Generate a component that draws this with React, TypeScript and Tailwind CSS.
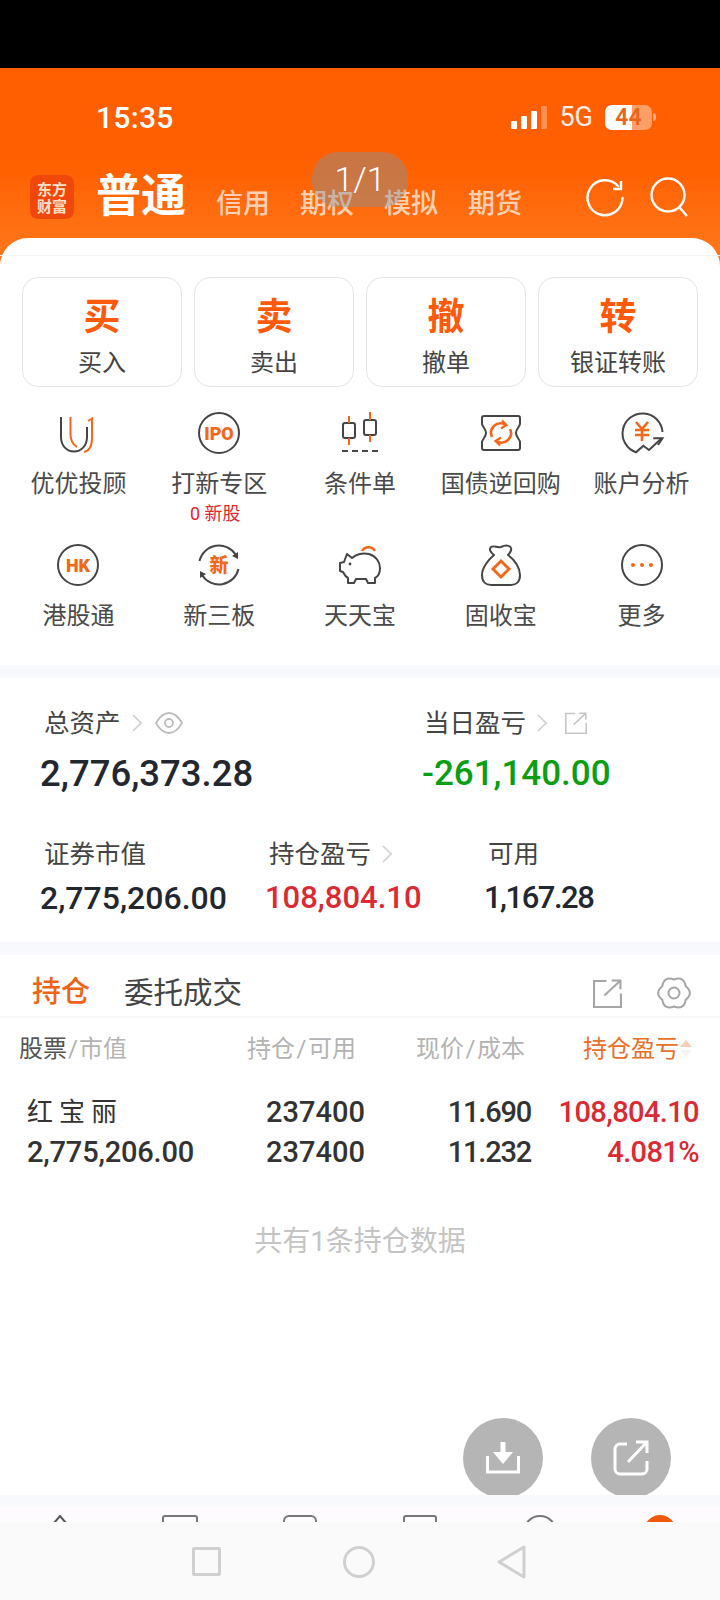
import React from 'react';

const CJK = "font-['Roboto','Noto_Sans_CJK_SC',sans-serif]";
const DARK = '#454545';
const ORANGE = '#f2681a';

const actions = [
  { big: '买', label: '买入' },
  { big: '卖', label: '卖出' },
  { big: '撤', label: '撤单' },
  { big: '转', label: '银证转账' },
];

function Ring() {
  return <circle cx="21" cy="21" r="20" fill="none" stroke={DARK} strokeWidth="2" />;
}

const icons: Record<string, React.ReactNode> = {
  u: (
    <>
      <path d="M4 5V25C4 34 10 39.5 17 39.5S30 34 30 25V15" fill="none" stroke={DARK} strokeWidth="2" />
      <path d="M13.5 5V22C13.5 28 15 32 20 35" fill="none" stroke={ORANGE} strokeWidth="2" />
      <path d="M31 9L35 6.5V26C35 34 32 39 27 40" fill="none" stroke={ORANGE} strokeWidth="2" />
    </>
  ),
  ipo: (
    <>
      <Ring />
      <text x="21" y="27.5" textAnchor="middle" fontSize="18" fontWeight="900" fill={ORANGE} fontFamily="Roboto, sans-serif">IPO</text>
    </>
  ),
  candle: (
    <>
      <rect x="4" y="11" width="12" height="15" rx="2" fill="none" stroke={DARK} strokeWidth="2" />
      <path d="M10 4V11M10 26V33" stroke={ORANGE} strokeWidth="2" />
      <rect x="25" y="8" width="12" height="15" rx="2" fill="none" stroke={DARK} strokeWidth="2" />
      <path d="M31 0V8M31 23V30" stroke={ORANGE} strokeWidth="2" />
      <path d="M3 39H39" stroke={DARK} strokeWidth="2" strokeDasharray="6 4" />
    </>
  ),
  ticket: (
    <>
      <path d="M4 4H38a2 2 0 0 1 2 2V12C40 14 36 17 36 21S40 28 40 30V36a2 2 0 0 1-2 2H4a2 2 0 0 1-2-2V30C2 28 6 25 6 21S2 14 2 12V6a2 2 0 0 1 2-2Z" fill="none" stroke={DARK} strokeWidth="2" strokeLinejoin="round" />
      <path d="M12 25A9.5 9.5 0 0 1 25 12.5M30 17A9.5 9.5 0 0 1 17 29.5" fill="none" stroke={ORANGE} strokeWidth="2.6" />
      <path d="M22 8.5L26.5 13 21 16.5M20 33.5L15.5 29 21 25.5" fill="none" stroke={ORANGE} strokeWidth="2.2" />
    </>
  ),
  yuan: (
    <>
      <path d="M41.5 20A20 20 0 1 0 15 40.3L22.3 33.7 28 38 40.7 26.3" fill="none" stroke={DARK} strokeWidth="2" />
      <path d="M32.3 26.3H41.5L37 33" fill="none" stroke={DARK} strokeWidth="2" />
      <path d="M15 10L21 17 27 10M14 18H28M14 23H28M21 17V29" fill="none" stroke={ORANGE} strokeWidth="2.6" />
    </>
  ),
  hk: (
    <>
      <Ring />
      <text x="21" y="27.5" textAnchor="middle" fontSize="18" fontWeight="900" fill={ORANGE} fontFamily="Roboto, sans-serif">HK</text>
    </>
  ),
  xin: (
    <>
      <path d="M1.5 17A20 20 0 0 1 38 11M40.5 25A20 20 0 0 1 4 31" fill="none" stroke={DARK} strokeWidth="2" />
      <path d="M34 12L40 8 40 15ZM8 30L2 34 2 27Z" fill={DARK} />
      <text x="21" y="28" textAnchor="middle" fontSize="19" fontWeight="900" fill={ORANGE} fontFamily="Noto Sans CJK SC, sans-serif">新</text>
    </>
  ),
  pig: (
    <>
      <path d="M8 10L13 14C17 10 24 8.5 30 10 37 12 41 18 41 24 41 30 38 33 36 34V39H29L27 35H17L15 39H9V34C7 33 5 30 4 28L1 27V19L5 18Z" fill="none" stroke={DARK} strokeWidth="2" strokeLinejoin="round" />
      <circle cx="11" cy="20" r="1.4" fill={DARK} />
      <path d="M23 7A7.5 7.5 0 0 1 36 7" fill="none" stroke={ORANGE} strokeWidth="2.4" />
    </>
  ),
  bag: (
    <>
      <path d="M14 11C10 8 9 5 11 3 14 1 17 4 21 3 25 1 30 1 31 4 32 7 30 9 28 11 35 16 40 24 40 31 40 38 36 41 31 41H11C6 41 2 38 2 31 2 24 8 16 14 11Z" fill="none" stroke={DARK} strokeWidth="2" strokeLinejoin="round" />
      <path d="M21 17L29 25 21 33 13 25Z" fill="none" stroke={ORANGE} strokeWidth="3" />
    </>
  ),
  more: (
    <>
      <Ring />
      <circle cx="12" cy="21" r="2" fill={ORANGE} />
      <circle cx="21" cy="21" r="2" fill={ORANGE} />
      <circle cx="30" cy="21" r="2" fill={ORANGE} />
    </>
  ),
};

const tools = [
  { icon: 'u', label: '优优投顾' },
  { icon: 'ipo', label: '打新专区', sub: '0 新股' },
  { icon: 'candle', label: '条件单' },
  { icon: 'ticket', label: '国债逆回购' },
  { icon: 'yuan', label: '账户分析' },
  { icon: 'hk', label: '港股通' },
  { icon: 'xin', label: '新三板' },
  { icon: 'pig', label: '天天宝' },
  { icon: 'bag', label: '固收宝' },
  { icon: 'more', label: '更多' },
];

function Chevron({ className = '' }: { className?: string }) {
  return (
    <svg width="10" height="18" viewBox="0 0 10 18" className={className}>
      <path d="M1 1L9 9 1 17" fill="none" stroke="#cfcfcf" strokeWidth="1.6" />
    </svg>
  );
}

function ShareIcon({ size, color, width = 2 }: { size: number; color: string; width?: number }) {
  return (
    <svg width={size} height={size} viewBox="0 0 28 28">
      <path d="M13 2H1V27H27V14" fill="none" stroke={color} strokeWidth={width} />
      <path d="M11 16L26 2M18 1.5H26.5V10" fill="none" stroke={color} strokeWidth={width} />
    </svg>
  );
}

function StatusBar() {
  return (
    <div className="flex h-[98px] items-center justify-between pl-[96px] pr-[64px]">
      <span className="mt-[1px] text-[30px] font-medium text-white tracking-[0.3px] font-['Roboto',sans-serif]">15:35</span>
      <div className="flex items-center">
        <div className="flex h-[23px] items-end gap-[4px]">
          <span className="h-[8px] w-[6px] rounded-[1px] bg-white" />
          <span className="h-[13px] w-[6px] rounded-[1px] bg-white" />
          <span className="h-[18px] w-[6px] rounded-[1px] bg-white" />
          <span className="h-[23px] w-[6px] rounded-[1px] bg-white/30" />
        </div>
        <span className="ml-[12px] text-[27px] text-white/90 font-['Roboto',sans-serif]">5G</span>
        <div className="relative ml-[12px] flex h-[25px] w-[47px] overflow-hidden rounded-[7px] bg-white/40">
          <span className="h-full w-[27px] bg-white" />
          <span className="absolute inset-0 text-center text-[23px] leading-[25px] font-semibold text-[#e8661c] font-['Roboto',sans-serif]">44</span>
        </div>
        <span className="ml-[1px] h-[8px] w-[3px] rounded-r bg-white/50" />
      </div>
    </div>
  );
}

function TopTabs() {
  return (
    <div className="relative flex h-[62px] items-center pl-[30px] pr-[32px]">
      <div className="flex h-[44px] w-[44px] flex-col items-center justify-center rounded-[8px] bg-[#f0480c] text-[15px] leading-[17px] font-bold text-[#ffe0c8] font-['Noto_Sans_CJK_SC',serif]">
        <span>东方</span>
        <span>财富</span>
      </div>
      <span className={`ml-[22px] text-[45px] leading-[52px] font-bold text-white ${CJK}`}>普通</span>
      <div className={`ml-[30px] mt-[14px] flex gap-[30px] text-[27px] font-medium leading-[36px] text-white/70 ${CJK}`}>
        <span>信用</span>
        <span>期权</span>
        <span>模拟</span>
        <span>期货</span>
      </div>
      <div className="ml-auto flex items-center gap-[25px]">
        <svg width="40" height="40" viewBox="0 0 40 40">
          <path d="M33 9A17.5 17.5 0 1 0 37.5 21" fill="none" stroke="#fff" strokeWidth="2.4" strokeLinecap="round" />
          <path d="M36 4V12H28" fill="none" stroke="#fff" strokeWidth="2.4" />
        </svg>
        <svg width="38" height="40" viewBox="0 0 38 40">
          <circle cx="18" cy="18" r="16.5" fill="none" stroke="#fff" strokeWidth="2.4" />
          <path d="M29 30L37 39" stroke="#fff" strokeWidth="2.4" />
        </svg>
      </div>
    </div>
  );
}

function Metric({ label, value, color, valueClass, labelClass = 'ml-[4px]', chevron, extra }: { label: string; value: string; color: string; valueClass: string; labelClass?: string; chevron?: boolean; extra?: React.ReactNode }) {
  return (
    <div>
      <div className={`flex h-[36px] items-center text-[25.5px] text-[#444] ${labelClass} ${CJK}`}>
        <span>{label}</span>
        {chevron && <Chevron className="ml-[11px]" />}
        {extra}
      </div>
      <div className={`font-medium font-['Roboto',sans-serif] ${valueClass}`} style={{ color }}>
        {value}
      </div>
    </div>
  );
}

export default function App() {
  return (
    <div className={`relative h-[1600px] w-[720px] overflow-hidden bg-white ${CJK}`}>
      <div className="h-[68px] bg-black" />
      <div className="h-[200px] bg-gradient-to-b from-[#ff5e00] via-[#ff6000] to-[#ff7a1c]">
        <StatusBar />
        <TopTabs />
      </div>

      {/* page counter overlay, the tab labels show through it */}
      <div className="absolute left-[312px] top-[152px] flex h-[55px] w-[96px] items-center justify-center rounded-[26px] bg-[#879196]/45 text-[34px] font-light text-white font-['Roboto',sans-serif]">
        1/1
      </div>

      <div className="relative -mt-[30px] h-[427px] rounded-t-[28px] bg-white">
        <div className="h-[18px] border-b border-[#f4f4f4]" />
        <div className="mt-[21px] flex gap-[12px] pl-[22px]">
          {actions.map((a) => (
            <div key={a.big} className="flex h-[110px] w-[160px] flex-col items-center rounded-[16px] border border-[#e4e4e4]">
              <span className="mt-[15px] text-[37px] leading-[50px] font-bold text-[#ff5a0a]">{a.big}</span>
              <span className="mt-[4px] text-[24px] leading-[32px] text-[#444]">{a.label}</span>
            </div>
          ))}
        </div>

        <div className="mt-[25px] grid grid-cols-5 px-[8px]">
          {tools.map((t, i) => (
            <div key={t.label} className={i < 5 ? 'flex h-[132px] flex-col items-center' : 'flex flex-col items-center'}>
              <svg width="42" height="42" viewBox="0 0 42 42" className="overflow-visible">{icons[t.icon]}</svg>
              <span className="mt-[13px] text-[24px] leading-[34px] text-[#4a4a4a] whitespace-nowrap">{t.label}</span>
              {t.sub && <span className="-ml-[8px] mt-[2px] text-[18px] leading-[22px] text-[#e0262f]">{t.sub}</span>}
            </div>
          ))}
        </div>
      </div>

      <div className="h-[13px] bg-[#f7f9fc]" />

      <section className="h-[264px] pl-[40px]">
        <div className="flex pt-[27px]">
          <div className="w-[382px]">
            <Metric
              chevron
              label="总资产"
              value="2,776,373.28"
              color="#23272f"
              valueClass="mt-[12px] text-[36.5px] leading-[42px]"
              extra={
                <svg width="28" height="24" viewBox="0 0 28 24" className="ml-[13px]">
                  <path d="M1 12C5 5 9 2 14 2S23 5 27 12C23 19 19 22 14 22S5 19 1 12Z" fill="none" stroke="#bdbdbd" strokeWidth="1.8" />
                  <circle cx="14" cy="12" r="4" fill="none" stroke="#bdbdbd" strokeWidth="1.8" />
                </svg>
              }
            />
          </div>
          <Metric
            chevron
            label="当日盈亏"
            value="-261,140.00"
            color="#0a9e12"
            labelClass="ml-[2px]"
            valueClass="mt-[12px] text-[35px] leading-[42px]"
            extra={
              <span className="ml-[18px] flex">
                <ShareIcon size={22} color="#c6c6c6" />
              </span>
            }
          />
        </div>
        <div className="mt-[41px] flex">
          <div className="w-[225px]">
            <Metric label="证券市值" value="2,775,206.00" color="#23272f" valueClass="mt-[8px] text-[32px] leading-[36px]" />
          </div>
          <div className="w-[219px]">
            <Metric chevron label="持仓盈亏" value="108,804.10" color="#da2a33" valueClass="mt-[8px] text-[31px] leading-[36px]" />
          </div>
          <Metric label="可用" value="1,167.28" color="#23272f" valueClass="mt-[8px] text-[31px] leading-[36px] tracking-[-1.5px]" />
        </div>
      </section>

      <div className="h-[13px] bg-[#f7f9fc]" />

      <section>
        <div className="flex h-[63px] items-center border-b-[2px] border-[#f8f9fb] pl-[32px] pr-[28px] pt-[15px]">
          <span className="text-[29px] font-medium text-[#ee6417]">持仓</span>
          <span className="ml-[34px] text-[29.5px] text-[#444]">委托成交</span>
          <div className="ml-auto flex items-center gap-[34px]">
            <ShareIcon size={29} color="#a6a6a6" />
            <svg width="36" height="36" viewBox="0 0 36 36">
              <path d="M29.7 11.25Q38 18 29.7 24.75Q28 35.3 18 31.5Q8 35.3 6.3 24.75Q-2 18 6.3 11.25Q8 .7 18 4.5Q28 .7 29.7 11.25Z" fill="none" stroke="#a6a6a6" strokeWidth="2" strokeLinejoin="round" />
              <circle cx="18" cy="18" r="5.5" fill="none" stroke="#a6a6a6" strokeWidth="2" />
            </svg>
          </div>
        </div>

        <div className="flex h-[64px] items-center pb-[2px] text-[24px] text-[#b3b3b3]">
          <span className="ml-[19px] w-[228px]"><span className="text-[#555]">股票</span><span className="mx-[1px]">/</span>市值</span>
          <span className="w-[169px]">持仓<span className="mx-[1.5px]">/</span>可用</span>
          <span className="w-[167px]">现价<span className="mx-[1.5px]">/</span>成本</span>
          <span className="relative text-[#e8702b]">
            持仓盈亏
            <span className="absolute -right-[13px] top-[9px] h-0 w-0 border-x-[6px] border-b-[7px] border-x-transparent border-b-[#f8cdb4]" />
            <span className="absolute -right-[13px] top-[19px] h-0 w-0 border-x-[6px] border-t-[7px] border-x-transparent border-t-[#f4f4f4]" />
          </span>
        </div>

        <div className="grid grid-cols-[239px_96px_169px_168px] pl-[27px] pt-[10px] font-['Roboto','Noto_Sans_CJK_SC',sans-serif] text-[29px] leading-[40px] font-medium text-[#333]">
          <span className="whitespace-nowrap text-[26px] font-normal tracking-[6px]">红宝丽</span>
          <span>237400</span>
          <span className="text-right tracking-[-1.2px]">11.690</span>
          <span className="text-right tracking-[-0.6px] text-[#da2a33]">108,804.10</span>
          <span className="whitespace-nowrap tracking-[-0.2px]">2,775,206.00</span>
          <span>237400</span>
          <span className="text-right tracking-[-1.2px]">11.232</span>
          <span className="text-right tracking-[-0.6px] text-[#da2a33]">4.081%</span>
        </div>

        <div className="mt-[50px] text-center text-[28px] leading-[40px] text-[#c4c4c4]">共有1条持仓数据</div>
      </section>

      {/* floating actions */}
      <div className="absolute left-[463px] top-[1418px] flex gap-[48px]">
        <button className="flex h-[80px] w-[80px] items-center justify-center rounded-full bg-[#b5b5b5]">
          <svg width="34" height="32" viewBox="0 0 34 32">
            <path d="M17 0V10" stroke="#fff" strokeWidth="5" />
            <path d="M7 10H27L17 22Z" fill="#fff" />
            <path d="M1.5 14V30H32.5V14" fill="none" stroke="#fff" strokeWidth="3" />
          </svg>
        </button>
        <button className="flex h-[80px] w-[80px] items-center justify-center rounded-full bg-[#b5b5b5]">
          <svg width="36" height="36" viewBox="0 0 36 36">
            <path d="M14 4H7a5 5 0 0 0-5 5V29a5 5 0 0 0 5 5H29a5 5 0 0 0 5-5V21" fill="none" stroke="#fff" strokeWidth="3" />
            <path d="M15 22L33 3M23 2H34V13" fill="none" stroke="#fff" strokeWidth="3" />
          </svg>
        </button>
      </div>

      {/* bottom tab bar, mostly hidden by the system bar */}
      <div className="absolute inset-x-0 top-[1495px]">
        <div className="h-[11px] bg-[#f7f9fc]" />
        <div className="grid h-[16px] grid-cols-6 justify-items-center overflow-hidden bg-[#fdfbfd] pt-[9px]">
          <svg width="36" height="30" viewBox="0 0 36 30"><path d="M12 8L18 1 24 8" fill="none" stroke="#555" strokeWidth="2" /></svg>
          <div className="h-[30px] w-[36px] rounded-[3px] border-2 border-[#777]" />
          <div className="h-[30px] w-[34px] rounded-[6px] border-2 border-[#777]" />
          <div className="h-[30px] w-[34px] rounded-[3px] border-2 border-[#777]" />
          <div className="h-[34px] w-[34px] rounded-full border-2 border-[#777]" />
          <div className="h-[34px] w-[32px] rounded-full bg-[#ee5a0a]" />
        </div>
        <div className="flex h-[78px] items-center justify-center bg-[#fafafa]">
          <div className="-ml-[1px] flex items-center gap-[122px] pt-[1px]">
            <div className="h-[29px] w-[29px] rounded-[2px] border-[3px] border-[#d0d0d0]" />
            <div className="h-[32px] w-[32px] rounded-full border-[3px] border-[#d0d0d0]" />
            <svg width="30" height="34" viewBox="0 0 30 34">
              <path d="M27 2V32L2 17Z" fill="none" stroke="#d0d0d0" strokeWidth="3" strokeLinejoin="round" />
            </svg>
          </div>
        </div>
      </div>
    </div>
  );
}
